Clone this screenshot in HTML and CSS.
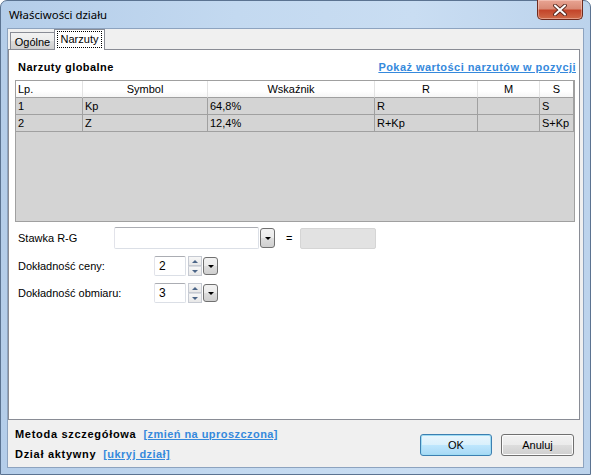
FILE: index.html
```html
<!DOCTYPE html>
<html lang="pl">
<head>
<meta charset="utf-8">
<title>Właściwości działu</title>
<link rel="stylesheet" href="styles.css">
</head>
<body>
<div class="window">
  <div class="titlebar">
    <span class="title">Właściwości działu</span>
    <div class="close">
      <svg width="16" height="12" viewBox="0 0 16 12"><path d="M3 1.5 L13 10.5 M13 1.5 L3 10.5" fill="none" stroke="#5a2a20" stroke-width="3.8" stroke-linecap="round"/><path d="M3 1.5 L13 10.5 M13 1.5 L3 10.5" fill="none" stroke="#ffffff" stroke-width="2" stroke-linecap="round"/></svg>
    </div>
  </div>
  <div class="client">
    <div class="tabs">
      <div class="tab">Ogólne</div>
      <div class="tab active"><span class="focus">Narzuty</span></div>
    </div>
    <div class="panel">
      <div class="panel-head">
        <span class="bold">Narzuty globalne</span>
        <span class="link bold">Pokaż wartości narzutów w pozycji</span>
      </div>
      <div class="grid">
        <div class="row head">
          <div class="cell left">Lp.</div>
          <div class="cell">Symbol</div>
          <div class="cell">Wskaźnik</div>
          <div class="cell">R</div>
          <div class="cell">M</div>
          <div class="cell">S</div>
        </div>
        <div class="row">
          <div class="cell">1</div>
          <div class="cell">Kp</div>
          <div class="cell">64,8%</div>
          <div class="cell">R</div>
          <div class="cell"></div>
          <div class="cell">S</div>
        </div>
        <div class="row">
          <div class="cell">2</div>
          <div class="cell">Z</div>
          <div class="cell">12,4%</div>
          <div class="cell">R+Kp</div>
          <div class="cell"></div>
          <div class="cell">S+Kp</div>
        </div>
      </div>
      <div class="form">
        <div class="frow r1">
          <span class="label l1">Stawka R-G</span>
          <div class="textbox wide"></div>
          <div class="dropbtn"><span class="tri"></span></div>
          <span class="eq">=</span>
          <div class="graybox"></div>
        </div>
        <div class="frow">
          <span class="label l2">Dokładność ceny:</span>
          <div class="textbox num">2</div>
          <div class="spin"><div class="sb up"><span class="ta up"></span></div><div class="sb dn"><span class="ta dn"></span></div></div>
          <div class="dropbtn small"><span class="tri"></span></div>
        </div>
        <div class="frow">
          <span class="label l2">Dokładność obmiaru:</span>
          <div class="textbox num">3</div>
          <div class="spin"><div class="sb up"><span class="ta up"></span></div><div class="sb dn"><span class="ta dn"></span></div></div>
          <div class="dropbtn small"><span class="tri"></span></div>
        </div>
      </div>
    </div>
    <div class="footer">
      <div class="info">
        <div class="line"><span class="bold wide">Metoda szczegółowa</span><span class="link bold">[zmień na uproszczona]</span></div>
        <div class="line"><span class="bold wide">Dział aktywny</span><span class="link bold">[ukryj dział]</span></div>
      </div>
      <div class="buttons">
        <div class="btn ok">OK</div>
        <div class="btn">Anuluj</div>
      </div>
    </div>
  </div>
</div>
</body>
</html>
```

FILE: styles.css
```css
html, body {
  margin: 0;
  padding: 0;
  background: #ffffff;
}
body {
  width: 591px;
  height: 475px;
  overflow: hidden;
  font-family: "Liberation Sans", Arial, sans-serif;
  font-size: 11px;
  color: #000;
}
.window {
  width: 591px;
  height: 475px;
  box-sizing: border-box;
  border: 1px solid #5b7391;
  border-radius: 7px 7px 0 0;
  background: linear-gradient(90deg, #b4cde9 0%, #c3d9f0 40%, #c9ddf2 70%, #bcd3ec 100%);
  padding: 0 6px 6px 6px;
  display: flex;
  flex-direction: column;
}
.titlebar {
  height: 27px;
  display: flex;
  align-items: flex-start;
  flex-shrink: 0;
}
.title {
  padding: 6px 0 0 2px;
  line-height: 16px;
  font-family: "Noto Sans", "Liberation Sans", sans-serif;
  font-size: 11.4px;
  color: #000;
}
.close {
  margin-left: auto;
  margin-right: 1px;
  margin-top: -1px;
  width: 46px;
  height: 20px;
  box-sizing: border-box;
  border: 1px solid #6e2b1e;
  border-top: none;
  border-radius: 0 0 5px 5px;
  background: linear-gradient(180deg, #e8a493 0%, #d98a76 45%, #c4452a 55%, #cf6a48 100%);
  box-shadow: inset 0 0 0 1px rgba(255,220,210,0.45);
  display: flex;
  align-items: center;
  justify-content: center;
}
.client {
  flex: 1;
  box-sizing: border-box;
  border: 1px solid #8da3bf;
  background: #f0f0f0;
  display: flex;
  flex-direction: column;
}
.tabs {
  height: 21px;
  margin-bottom: -1px;
  padding-left: 2px;
  display: flex;
  align-items: flex-end;
  position: relative;
  z-index: 1;
}
.tab {
  box-sizing: border-box;
  height: 17px;
  width: 45px;
  margin-bottom: 1px;
  border: 1px solid #898c95;
  border-bottom: none;
  background: linear-gradient(180deg, #f2f2f2 0%, #ebebeb 50%, #dddddd 51%, #cfcfcf 100%);
  display: flex;
  align-items: center;
  justify-content: center;
  line-height: 14px;
  padding-top: 1px;
}
.tab.active {
  width: 51px;
  height: 21px;
  margin-bottom: 0;
  margin-left: -1px;
  background: #ffffff;
  align-items: flex-start;
  padding-top: 1px;
}
.focus {
  display: block;
  border: 1px dotted #000;
  padding: 0 3px;
  line-height: 15px;
  height: 15px;
}
.panel {
  width: 572px;
  height: 371px;
  box-sizing: border-box;
  border: 1px solid #898c95;
  background: #ffffff;
  padding: 0 3px 0 6px;
  flex-shrink: 0;
}
.panel-head {
  margin-top: 8px;
  height: 18px;
  line-height: 18px;
  display: flex;
  justify-content: space-between;
  padding-left: 3px;
}
.bold {
  font-weight: bold;
  letter-spacing: 0.45px;
}
.bold.wide {
  letter-spacing: 0.7px;
}
.link {
  color: #3589dc;
  text-decoration: underline;
}
.grid {
  margin-top: 4px;
  width: 560px;
  height: 142px;
  box-sizing: border-box;
  border: 1px solid #a0a0a0;
  background: #d4d4d4;
}
.row {
  display: grid;
  grid-template-columns: 67px 125px 167px 103px 62px 34px;
  height: 17px;
}
.cell {
  box-sizing: border-box;
  border-right: 1px solid #a0a0a0;
  border-bottom: 1px solid #a0a0a0;
  padding-left: 2px;
  line-height: 16px;
  white-space: nowrap;
  overflow: hidden;
}
.row.head {
  background: linear-gradient(180deg, #ffffff 0%, #ffffff 60%, #f4f4f4 100%);
}
.row.head .cell {
  text-align: center;
  border-right: 1px solid #e3e3e3;
  border-bottom: 1px solid #a0a0a0;
  padding-left: 0;
}
.row.head .cell.left {
  text-align: left;
  padding-left: 2px;
}
.row.head .cell:last-child {
  border-right: 1px solid #a0a0a0;
}
.form {
  margin-top: 5px;
  padding-left: 3px;
  display: flex;
  flex-direction: column;
  gap: 7px;
}
.frow {
  display: flex;
  align-items: center;
  height: 20px;
}
.frow.r1 {
  height: 22px;
}
.label {
  flex-shrink: 0;
}
.l1 {
  width: 96px;
}
.l2 {
  width: 136px;
}
.textbox {
  box-sizing: border-box;
  height: 20px;
  border: 1px solid #dbdfe6;
  border-top-color: #abadb3;
  border-left-color: #e2e3ea;
  background: #fff;
  border-radius: 2px;
}
.textbox.wide {
  width: 145px;
  height: 22px;
}
.textbox.num {
  width: 32px;
  padding-left: 4px;
  line-height: 18px;
  font-size: 12px;
}
.dropbtn {
  box-sizing: border-box;
  width: 15px;
  height: 20px;
  margin-left: 1px;
  border: 1px solid #707070;
  border-radius: 3px;
  background: linear-gradient(180deg, #f2f2f2 0%, #ebebeb 50%, #dddddd 51%, #cfcfcf 100%);
  display: flex;
  align-items: center;
  justify-content: center;
}
.dropbtn.small {
  height: 18px;
}
.tri {
  width: 0;
  height: 0;
  border-left: 3px solid transparent;
  border-right: 3px solid transparent;
  border-top: 3px solid #000;
}
.eq {
  margin-left: 11px;
  width: 14px;
}
.graybox {
  box-sizing: border-box;
  width: 76px;
  height: 21px;
  border: 1px solid #d5d5d5;
  border-radius: 2px;
  background: #e2e2e2;
}
.spin {
  margin-left: 2px;
  width: 14px;
  height: 20px;
  display: flex;
  flex-direction: column;
}
.sb {
  box-sizing: border-box;
  height: 10px;
  border: 1px solid #c6cad2;
  background: linear-gradient(180deg, #f7f7f7 0%, #e8e8e8 100%);
  display: flex;
  align-items: center;
  justify-content: center;
}
.sb.dn {
  border-top-color: #d8dbe0;
}
.ta {
  width: 0;
  height: 0;
  border-left: 3px solid transparent;
  border-right: 3px solid transparent;
}
.ta.up {
  border-bottom: 3px solid #4b6587;
}
.ta.dn {
  border-top: 3px solid #4b6587;
}
.footer {
  flex: 1;
  display: flex;
  justify-content: space-between;
  padding: 0 9px 0 7px;
}
.info {
  padding-top: 4px;
}
.line {
  height: 20px;
  line-height: 20px;
  display: flex;
  gap: 7px;
}
.buttons {
  margin-top: 14px;
  display: flex;
  gap: 9px;
}
.btn {
  box-sizing: border-box;
  width: 73px;
  height: 22px;
  border: 1px solid #707070;
  border-radius: 3px;
  background: linear-gradient(180deg, #f2f2f2 0%, #ebebeb 50%, #dddddd 51%, #cfcfcf 100%);
  box-shadow: inset 0 0 0 1px #fcfcfc;
  display: flex;
  align-items: center;
  justify-content: center;
  line-height: 14px;
}
.btn.ok {
  width: 72px;
  border-color: #3c7fb1;
  background: linear-gradient(180deg, #eaf6fd 0%, #d9f0fc 50%, #bee6fd 51%, #a7d9f5 100%);
  box-shadow: inset 0 0 0 1px #9fdcf4;
}
```
